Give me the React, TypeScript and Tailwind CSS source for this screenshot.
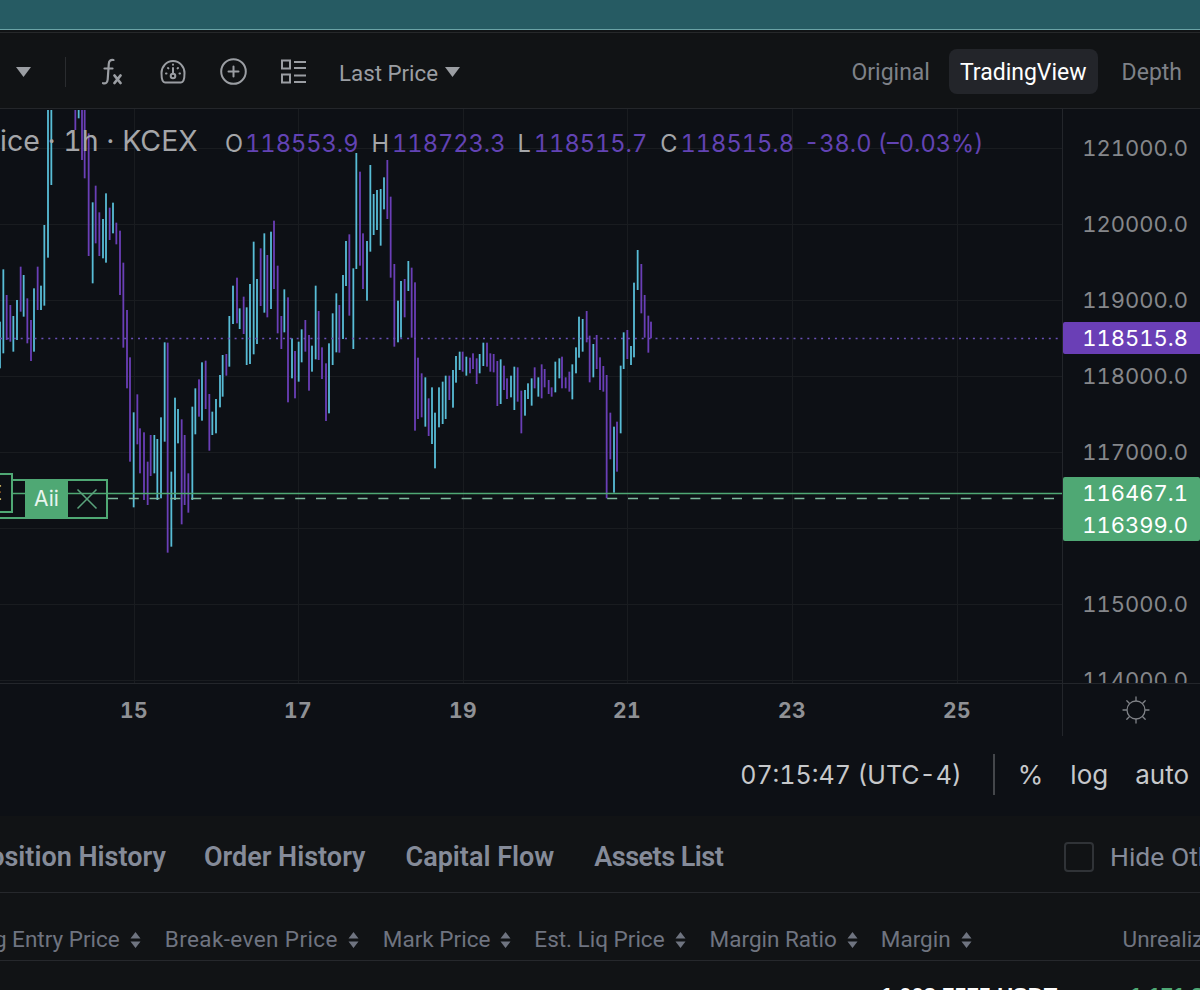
import React from 'react';
import { X } from 'lucide-react';

// bars read off the chart as [x, top, bottom, colour], c = cyan, p = purple
type Bar = [number, number, number, 'c' | 'p'];

const rawLeft: Bar[] = [
  [0, 455, 595, 'c'], [10, 298, 550, 'c'], [20, 375, 510, 'p'], [31, 405, 515, 'p'], [40, 438, 545, 'c'],
  [51, 390, 510, 'c'], [62, 290, 425, 'p'], [71, 315, 440, 'c'], [82, 385, 520, 'p'], [93, 450, 573, 'p'],
  [102, 355, 545, 'c'], [113, 290, 420, 'p'], [123, 347, 420, 'c'], [133, 165, 407, 'c'], [144, -180, 263, 'c'],
  [154, -180, 45, 'c'], [226, -180, -120, 'p'], [236, -180, -155, 'c'], [246, -180, -30, 'p'], [254, -180, 25, 'p'],
  [266, -110, 258, 'p'], [278, 97, 340, 'c'], [287, 47, 220, 'p'], [298, 127, 258, 'p'], [309, 147, 265, 'c'],
  [318, 70, 278, 'c'], [329, 113, 210, 'p'], [339, 98, 190, 'c'], [349, 158, 223, 'p'], [360, 182, 375, 'p'],
  [370, 278, 533, 'p'], [381, 420, 655, 'p'], [390, 562, 875, 'p'], [401, 727, 1012, 'c'], [412, 673, 823, 'p'],
  [420, 775, 910, 'p'], [432, 787, 990, 'p'], [443, 875, 1005, 'p'], [452, 795, 918, 'p'], [463, 795, 910, 'c'],
  [472, 807, 990, 'c'], [483, 742, 985, 'c'], [494, 517, 815, 'c'], [503, 518, 1148, 'p'], [514, 905, 1130, 'c'],
  [525, 683, 990, 'c'], [534, 717, 820, 'c'], [545, 748, 1063, 'p'], [554, 795, 1005, 'p'], [565, 910, 1028, 'p'],
  [577, 710, 990, 'c'], [586, 655, 793, 'c'], [597, 628, 740, 'p'], [606, 577, 752, 'c'], [617, 572, 717, 'p'],
  [628, 672, 842, 'p'], [637, 725, 795, 'c'], [648, 687, 790, 'c'], [660, 615, 712, 'c'], [668, 555, 680, 'c'],
  [679, 552, 617, 'p'], [688, 438, 590, 'c'], [699, 347, 462, 'c'], [711, 323, 460, 'p'], [719, 415, 477, 'c'],
  [731, 380, 492, 'p'], [740, 412, 585, 'c'], [750, 342, 582, 'c'], [761, 215, 553, 'c'], [771, 327, 522, 'c'],
  [782, 235, 408, 'p'], [793, 190, 428, 'c'], [802, 255, 442, 'p'], [813, 185, 417, 'c'], [822, 152, 357, 'p'],
  [833, 287, 490, 'p'], [844, 438, 537, 'p'], [853, 358, 487, 'c'], [864, 382, 697, 'p'], [876, 505, 625, 'c'],
  [885, 543, 685, 'p'], [896, 515, 635, 'c'], [905, 478, 577, 'c'], [916, 450, 545, 'p'], [927, 495, 662, 'p'],
  [936, 527, 605, 'c'], [947, 347, 568, 'c'], [956, 423, 570, 'p'], [966, 532, 627, 'p'], [978, 580, 753, 'p'],
  [987, 520, 730, 'c'], [998, 430, 585, 'c'], [1009, 370, 547, 'c'], [1018, 405, 548, 'p'], [1029, 315, 507, 'c'],
  [1038, 213, 348, 'c'], [1048, 193, 437, 'p'],
];

const rawRight: Bar[] = [
  [10, 295, 537, 'c'], [19, -51, 297, 'c'], [30, 5, 287, 'p'], [39, 190, 357, 'p'], [51, 213, 392, 'c'],
  [61, -15, 245, 'c'], [71, 72, 195, 'c'], [81, 60, 180, 'c'], [92, 57, 227, 'c'], [102, 22, 118, 'c'],
  [112, -30, 147, 'p'], [122, 80, 323, 'p'], [133, 282, 530, 'p'], [144, 392, 517, 'c'], [153, 333, 503, 'c'],
  [164, 327, 442, 'p'], [175, 273, 363, 'c'], [185, 293, 503, 'p'], [195, 337, 782, 'p'], [204, 563, 747, 'p'],
  [215, 610, 742, 'p'], [226, 622, 770, 'c'], [236, 685, 798, 'p'], [246, 652, 822, 'c'], [255, 728, 895, 'c'],
  [267, 652, 772, 'c'], [278, 635, 762, 'c'], [287, 617, 747, 'c'], [298, 617, 690, 'p'], [309, 600, 713, 'c'],
  [318, 558, 638, 'c'], [329, 545, 600, 'c'], [338, 545, 605, 'p'], [349, 560, 617, 'c'], [360, 563, 610, 'p'],
  [369, 550, 597, 'p'], [380, 565, 642, 'p'], [389, 552, 610, 'c'], [400, 518, 588, 'c'], [411, 518, 590, 'p'],
  [421, 550, 605, 'p'], [431, 552, 607, 'p'], [442, 573, 708, 'p'], [452, 568, 702, 'c'], [462, 587, 660, 'p'],
  [471, 625, 687, 'p'], [483, 617, 682, 'c'], [493, 590, 720, 'c'], [503, 592, 695, 'p'], [514, 662, 790, 'p'],
  [525, 660, 737, 'c'], [534, 640, 687, 'c'], [545, 625, 707, 'c'], [554, 592, 655, 'p'], [565, 622, 680, 'c'],
  [575, 583, 685, 'p'], [584, 597, 652, 'p'], [596, 630, 672, 'p'], [605, 652, 680, 'p'], [616, 575, 667, 'c'],
  [628, 565, 625, 'c'], [636, 560, 655, 'p'], [647, 622, 655, 'p'], [658, 605, 665, 'p'], [667, 583, 688, 'c'],
  [678, 532, 610, 'c'], [687, 440, 563, 'c'], [698, 447, 545, 'c'], [710, 423, 517, 'p'], [719, 497, 637, 'p'],
  [730, 522, 622, 'c'], [740, 495, 597, 'p'], [750, 562, 660, 'p'], [760, 588, 665, 'p'], [770, 615, 985, 'p'],
  [781, 728, 868, 'p'], [792, 770, 968, 'c'], [801, 755, 905, 'p'], [812, 587, 790, 'c'], [821, 487, 597, 'c'],
  [832, 480, 567, 'p'], [843, 528, 585, 'c'], [852, 338, 562, 'c'], [863, 240, 360, 'c'], [874, 282, 430, 'p'],
  [884, 375, 503, 'p'], [895, 437, 548, 'p'], [903, 455, 505, 'p'],
];

const PLOT_TOP = 109;

const bars = [
  ...rawLeft.map(([x, t, b, c]) => ({ x: x / 3, t: 170 + t / 3, b: 170 + b / 3, c })),
  ...rawRight.map(([x, t, b, c]) => ({ x: 350 + x / 3, t: 170 + t / 3, b: 170 + b / 3, c })),
];

const gridY = [148, 224, 300, 376, 452, 528, 604, 680];
const gridX = [134, 298, 463, 627, 792, 957];
const axisPrices: [string, number][] = [
  ['121000.0', 148], ['120000.0', 224], ['119000.0', 300], ['118000.0', 376],
  ['117000.0', 452], ['115000.0', 604], ['114000.0', 680],
];

const FxIcon = () => (
  <svg width="24" height="28" viewBox="0 0 24 28" fill="none" stroke="#9b9ea3" strokeWidth="2.200" strokeLinecap="round">
    <path d="M14.500 2c-3-.5-4.500.8-4.700 3.800L8.700 21.500c-.3 3-1.700 4.500-4.700 3.700" />
    <path d="M5.500 10.500h8" />
    <path d="M15.500 17.500l6 7.500M21.500 17.500l-6 7.500" strokeWidth="2.800" />
  </svg>
);

const GaugeIcon = () => (
  <svg width="26" height="26" viewBox="0 0 26 26" fill="none" stroke="#9b9ea3" strokeWidth="2" strokeLinecap="round">
    <path d="M5 23.500h16c1.800 0 3.500-2.500 3.500-9.500C24.500 7.500 19.500 2 13 2S1.500 7.500 1.500 14c0 7 1.700 9.500 3.500 9.500z" />
    <circle cx="13" cy="17" r="2.300" />
    <path d="M13 14.500V9M6 14.500h.5M8 9l.4.4M13 5.500v.3M18 9l-.4.4M20 14.500h-.5" />
  </svg>
);

const PlusCircleIcon = () => (
  <svg width="27" height="27" viewBox="0 0 27 27" fill="none" stroke="#9b9ea3" strokeWidth="2" strokeLinecap="round">
    <circle cx="13.500" cy="13.500" r="12.300" />
    <path d="M13.500 8.500v10M8.500 13.500h10" />
  </svg>
);

const LayoutIcon = () => (
  <svg width="25" height="26" viewBox="0 0 25 26" fill="none" stroke="#9b9ea3" strokeWidth="2">
    <rect x="1" y="1.500" width="8" height="8" />
    <rect x="1" y="15.500" width="8" height="8" />
    <path d="M13 3h12M13 9h12M13 16.500h12M13 23h12" />
  </svg>
);

const Caret = ({ className }: { className: string }) => (
  <svg width="15" height="10" viewBox="0 0 15 10" fill="#9b9ea3" className={className}>
    <path d="M0 0h15L7.500 10z" />
  </svg>
);

const SunIcon = () => (
  <svg width="28" height="28" viewBox="0 0 28 28" fill="none" stroke="#7f8287" strokeWidth="1.300" strokeLinecap="round">
    <circle cx="14" cy="14" r="9" />
    <path d="M14 1v3.500M14 23.500V27M1 14h3.500M23.500 14H27M4.800 4.800l2.500 2.500M20.700 20.700l2.500 2.500M4.800 23.200l2.500-2.500M20.700 7.300l2.500-2.500" />
  </svg>
);

const SortIcon = () => (
  <svg width="11" height="18" viewBox="0 0 11 18" fill="#6f7480" className="shrink-0">
    <path d="M5.500 1L10.500 7.500H.5zM5.500 17L.5 10.500h10z" />
  </svg>
);

const OhlcItem = ({ label, value, gap }: { label: string; value: string; gap: string }) => (
  <span className={`flex ${gap}`}>
    <span className="text-[#a4a6a9]">{label}</span>
    <span className="text-[#6243b4]">{value}</span>
  </span>
);

const columns = [
  { label: 'Avg Entry Price', className: '' },
  { label: 'Break-even Price', className: 'tracking-[0.4px]' },
  { label: 'Mark Price', className: '-mr-px' },
  { label: 'Est. Liq Price', className: '' },
  { label: 'Margin Ratio', className: '-mr-px' },
  { label: 'Margin', className: '' },
];

const App: React.FC = () => {
  return (
    <div className="w-[1200px] h-[990px] overflow-hidden flex flex-col bg-[#111315] font-['Roboto',sans-serif]">
      {/* Top band */}
      <div className="h-[33px] shrink-0 bg-[#111315] border-b border-[#26282a]">
        <div className="h-[30px] bg-[#265b63] border-b border-[#6aa3a6]" />
      </div>

      {/* Chart toolbar */}
      <div className="h-[76px] shrink-0 pt-[2px] flex items-center border-b border-[#24262a] bg-[#111315]">
        <Caret className="ml-[16px] mr-[34px]" />
        <div className="w-px h-[30px] bg-[#2a2c2f] mr-[33px]" />
        <div className="mr-[37px] flex"><FxIcon /></div>
        <div className="mr-[34px] flex"><GaugeIcon /></div>
        <div className="mr-[34px] flex"><PlusCircleIcon /></div>
        <div className="mr-[33px] flex"><LayoutIcon /></div>
        <span className="pt-[4px] text-[22.300px] text-[#9b9ea3]">Last Price</span>
        <Caret className="ml-[7px]" />
        <div className="ml-auto flex items-center mr-[18px] text-[23px] text-[#7e8188]">
          <span className="mr-[19px] pt-[3px]">Original</span>
          <span className="h-[45px] px-[11px] pt-[3px] flex items-center rounded-lg bg-[#23252a] text-white">TradingView</span>
          <span className="ml-[24px] pt-[3px]">Depth</span>
        </div>
      </div>

      {/* Chart */}
      <div className="h-[627px] shrink-0 flex bg-[#0d1015] font-['Inter',sans-serif] tabular-nums">
        <div className="w-[1062px] shrink-0 flex flex-col border-r border-[#23262b] box-content">
          <div className="relative h-[574px] overflow-hidden border-b border-[#23262b] box-content">
            <svg width="1062" height="574" viewBox={`0 ${PLOT_TOP} 1062 574`} className="absolute inset-0">
              {gridY.map((y) => (
                <line key={y} x1="0" x2="1062" y1={y + 0.5} y2={y + 0.5} stroke="#191c20" />
              ))}
              {gridX.map((x) => (
                <line key={x} x1={x + 0.5} x2={x + 0.5} y1={PLOT_TOP} y2="683" stroke="#191c20" />
              ))}
              {bars.map((b, i) => (
                <rect key={i} x={b.x - 0.9} y={b.t} width="1.8" height={b.b - b.t} fill={b.c === 'c' ? '#58bdd6' : '#6a3fb6'} />
              ))}
              <line x1="0" x2="1062" y1="338.5" y2="338.5" stroke="#6a4fb6" strokeDasharray="2 4.900" strokeWidth="1.500" />
              <line x1="0" x2="1062" y1="493.500" y2="493.500" stroke="#4fa874" strokeWidth="1.600" />
              <line x1="108" x2="1062" y1="498.500" y2="498.500" stroke="#7db89c" strokeDasharray="10 10.800" strokeWidth="1.400" />
            </svg>

            {/* OHLC legend */}
            <div className="absolute left-0 top-[17px] h-[34px] flex items-center">
              <span className="w-[225px] shrink-0 pb-[3px] text-[28.500px] text-[#a4a6a9]">ice · 1h · KCEX</span>
              <div className="flex items-center text-[23.600px] pt-[1px]">
                <OhlcItem label="O" value="118553.9" gap="gap-[2px]" />
                <span className="w-[13px]" />
                <OhlcItem label="H" value="118723.3" gap="gap-[3px]" />
                <span className="w-[12px]" />
                <OhlcItem label="L" value="118515.7" gap="gap-[3px]" />
                <span className="w-[13px]" />
                <OhlcItem label="C" value="118515.8" gap="gap-[3px]" />
                <span className="ml-[10px] text-[#6243b4]">-38.0 (–0.03%)</span>
              </div>
            </div>

            {/* Alert tag on the line */}
            <div className="absolute left-0 top-[370px] w-[108px] h-[40px] flex border-2 border-l-0 border-[#4fa874]">
              <div className="w-[26px]" />
              <div className="w-[45px] flex items-center justify-center bg-[#4fa874] text-[21px] text-[#e8f5ee]">Aii</div>
              <div className="flex-1 flex items-center justify-center">
                <X className="size-[38px] text-[#5aa27c]" strokeWidth={1} strokeLinecap="butt" />
              </div>
            </div>
            <div className="absolute left-0 top-[364px] w-[13px] h-[40px] border-2 border-l-0 border-[#4fa874] bg-[#0d1015] text-[20px] leading-[36px] text-[#c9e6d6] overflow-hidden">
              <span className="block -ml-[10px]">E</span>
            </div>
          </div>

          {/* Time axis */}
          <div className="relative flex-1">
            {gridX.map((x, i) => (
              <span
                key={x}
                className="absolute top-[14px] -translate-x-1/2 text-[21px] leading-[26px] font-bold tracking-[0.5px] text-[#8f9195]"
                style={{ left: x }}
              >
                {15 + i * 2}
              </span>
            ))}
          </div>
        </div>

        {/* Price axis */}
        <div className="relative flex-1 overflow-hidden">
          <div className="relative h-[574px] overflow-hidden">
            {axisPrices.map(([p, y]) => (
              <span
                key={p}
                className="absolute right-[12px] -translate-y-1/2 text-[22px] leading-[26px] text-[#85878b]"
                style={{ top: y - PLOT_TOP }}
              >
                {p}
              </span>
            ))}
            <div className="absolute left-0 right-0 top-[213px] h-[32px] flex items-center justify-end pr-[12px] rounded-l-[2px] bg-[#6a3fb6] text-[22px] text-white">
              118515.8
            </div>
            <div className="absolute left-0 right-0 top-[368px] h-[64px] flex flex-col justify-center items-end pr-[12px] rounded-[2px] bg-[#4fa874] text-[22px] leading-[32px] text-white">
              <span>116467.1</span>
              <span>116399.0</span>
            </div>
          </div>
          <div className="h-px bg-[#23262b]" />
          <div className="h-[52px] flex items-center justify-center pl-[8px]">
            <SunIcon />
          </div>
        </div>
      </div>

      {/* Chart status row */}
      <div className="h-[80px] shrink-0 pb-[4px] flex items-center justify-end pr-[11px] bg-[#0d1015] font-['Inter',sans-serif] tabular-nums text-[26px] text-[#c6c8cb]">
        <span className="pt-[4px] text-[25px]">07:15:47 (UTC-4)</span>
        <span className="w-[2px] h-[41px] ml-[31px] mr-[23px] bg-[#44474b]" />
        <span>%</span>
        <span className="ml-[27px]">log</span>
        <span className="ml-[27px]">auto</span>
      </div>

      {/* Position tabs */}
      <div className="h-[77px] shrink-0 pt-[6px] flex items-center border-b border-[#26282c] bg-[#111315]">
        <div className="flex items-center gap-[40px] -ml-[28px] text-[27px] font-semibold text-[#858b99] whitespace-nowrap">
          <span className="-mr-[2px]">Position History</span>
          <span>Order History</span>
          <span>Capital Flow</span>
          <span className="tracking-[-0.5px]">Assets List</span>
        </div>
        <div className="ml-auto flex items-center shrink-0 gap-[16px] w-[136px] whitespace-nowrap text-[26.500px] text-[#858b99]">
          <span className="size-[30px] shrink-0 rounded-[4px] border-2 border-[#303337]" />
          <span>Hide Other Symbols</span>
        </div>
      </div>

      {/* Table header */}
      <div className="h-[68px] shrink-0 pt-[26px] flex items-center border-b border-[#26282c] text-[22.500px] text-[#6f7480] whitespace-nowrap">
        <div className="flex items-center gap-[24px] -ml-[31px]">
          {columns.map((c) => (
            <span key={c.label} className={`flex items-center gap-[10px] ${c.className}`}>
              {c.label}
              <SortIcon />
            </span>
          ))}
        </div>
        <span className="ml-[151px]">Unrealized PNL</span>
      </div>

      {/* First row, cut by the bottom edge */}
      <div className="flex pl-[881px] pt-[22px] font-['Liberation_Sans',sans-serif] text-[22px] font-bold leading-[26px] whitespace-nowrap">
        <span className="text-white">1,003.7575 USDT</span>
        <span className="ml-[73px] text-[#4fa874]">1,171.83</span>
      </div>
    </div>
  );
};

export default App;
